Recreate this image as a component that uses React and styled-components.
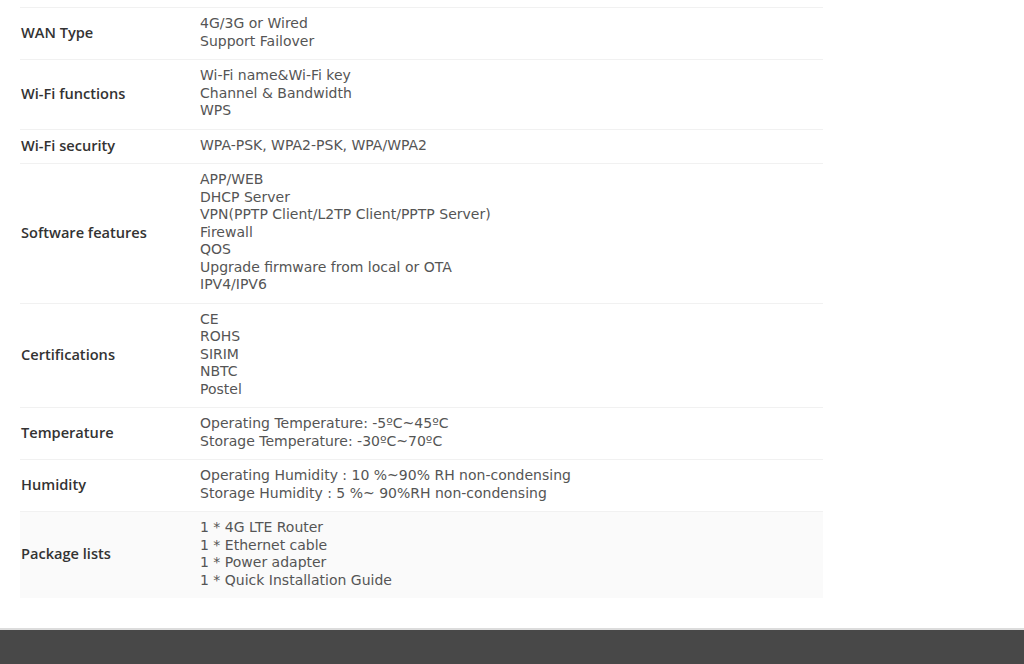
import React from "react";
import styled, { createGlobalStyle } from "styled-components";

const Global = createGlobalStyle`
  html, body { margin: 0; padding: 0; background: #fff; }
  body { font-family: "Open Sans", "Noto Sans", sans-serif; }
`;

const Page = styled.div`
  width: 1024px;
  height: 664px;
  overflow: hidden;
  display: flex;
  flex-direction: column;
`;

const Main = styled.main`
  flex: 1;
  padding: 7px 0 0 20px;
`;

const Table = styled.div`
  width: 803px;
  border-top: 1px solid #f1f1f1;
`;

const Row = styled.div`
  display: grid;
  grid-template-columns: 180px 1fr;
  align-items: center;
  padding: 7px 0 9px;
  border-bottom: 1px solid #f1f1f1;
  background: ${(p) => (p.$shade ? "#fafafa" : "#fff")};
  ${(p) => p.$shade && "border-bottom: none;"}
`;

const Label = styled.div`
  font-family: "Open Sans", "Noto Sans", sans-serif;
  font-size: 14.6px;
  font-weight: 600;
  color: #333;
  line-height: 17.5px;
  padding-left: 1px;
`;

const Value = styled.div`
  font-family: "DejaVu Sans", "Open Sans", sans-serif;
  font-size: 14px;
  color: #555;
  line-height: 17.5px;
`;

const Line = styled.div`
  white-space: nowrap;
`;

const Footer = styled.footer`
  height: 34px;
  background: #484848;
  border-top: 2px solid #dcdcdc;
`;

const rows = [
  ["WAN Type", ["4G/3G or Wired", "Support Failover"]],
  ["Wi-Fi functions", ["Wi-Fi name&Wi-Fi key", "Channel & Bandwidth", "WPS"]],
  ["Wi-Fi security", ["WPA-PSK, WPA2-PSK, WPA/WPA2"]],
  [
    "Software features",
    [
      "APP/WEB",
      "DHCP Server",
      "VPN(PPTP Client/L2TP Client/PPTP Server)",
      "Firewall",
      "QOS",
      "Upgrade firmware from local or OTA",
      "IPV4/IPV6",
    ],
  ],
  ["Certifications", ["CE", "ROHS", "SIRIM", "NBTC", "Postel"]],
  [
    "Temperature",
    ["Operating Temperature: -5ºC~45ºC", "Storage Temperature: -30ºC~70ºC"],
  ],
  [
    "Humidity",
    [
      "Operating Humidity : 10 %~90% RH non-condensing",
      "Storage Humidity : 5 %~ 90%RH non-condensing",
    ],
  ],
  [
    "Package lists",
    [
      "1 * 4G LTE Router",
      "1 * Ethernet cable",
      "1 * Power adapter",
      "1 * Quick Installation Guide",
    ],
  ],
];

export default function App() {
  return (
    <Page>
      <Global />
      <Main>
        <Table>
          {rows.map(([label, lines], i) => (
            <Row key={label} $shade={i === rows.length - 1}>
              <Label>{label}</Label>
              <Value>
                {lines.map((l) => (
                  <Line key={l}>{l}</Line>
                ))}
              </Value>
            </Row>
          ))}
        </Table>
      </Main>
      <Footer />
    </Page>
  );
}
